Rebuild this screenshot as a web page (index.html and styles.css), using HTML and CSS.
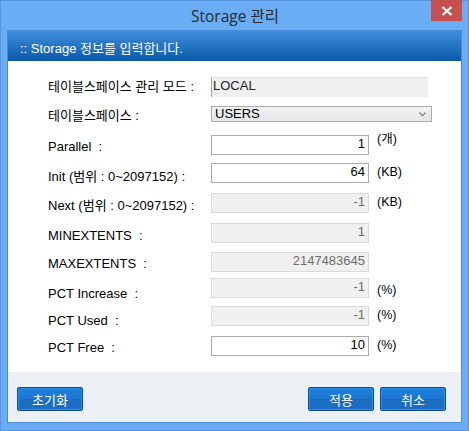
FILE: index.html
```html
<!DOCTYPE html>
<html lang="ko">
<head>
<meta charset="utf-8">
<title>Storage 관리</title>
<link rel="stylesheet" href="styles.css">
</head>
<body>
<div class="window">
  <div class="titlebar">
    <span class="title">Storage 관리</span>
    <button class="close" aria-label="닫기">
      <svg width="12" height="10" viewBox="0 0 12 10"><path d="M1.5 1 L10.5 9 M10.5 1 L1.5 9" stroke="#fff" stroke-width="2.2" fill="none"/></svg>
    </button>
  </div>
  <div class="content">
    <div class="header">:: Storage 정보를 입력합니다.</div>
    <div class="form">
      <div class="label">테이블스페이스 관리 모드 :</div>
      <div class="readonly">LOCAL</div>

      <div class="label">테이블스페이스 :</div>
      <div class="combo"><span>USERS</span>
        <svg class="chev" width="7" height="5" viewBox="0 0 7 5"><path d="M0.5 0.5 L3.5 3.8 L6.5 0.5" stroke="#8a8a8a" stroke-width="1.4" fill="none"/></svg>
      </div>

      <div class="label down-2">Parallel &nbsp;:</div>
      <div class="field">1</div>
      <div class="unit up-5">(개)</div>

      <div class="label down-4">Init (범위 : 0~2097152) :</div>
      <div class="field">64</div>
      <div class="unit">(KB)</div>

      <div class="label down-3">Next (범위 : 0~2097152) :</div>
      <div class="field disabled">-1</div>
      <div class="unit">(KB)</div>

      <div class="label down-3">MINEXTENTS &nbsp;:</div>
      <div class="field disabled">1</div>
      <div class="unit"></div>

      <div class="label down-2">MAXEXTENTS &nbsp;:</div>
      <div class="field disabled">2147483645</div>
      <div class="unit"></div>

      <div class="label down-6">PCT Increase &nbsp;:</div>
      <div class="field disabled">-1</div>
      <div class="unit down-3">(%)</div>

      <div class="label down-5">PCT Used &nbsp;:</div>
      <div class="field disabled">-1</div>
      <div class="unit">(%)</div>

      <div class="label down-2">PCT Free &nbsp;:</div>
      <div class="field">10</div>
      <div class="unit">(%)</div>
    </div>
    <div class="footer">
      <button class="btn">초기화</button>
      <div class="right">
        <button class="btn">적용</button>
        <button class="btn">취소</button>
      </div>
    </div>
  </div>
</div>
</body>
</html>
```
FILE: styles.css
```css
html, body {
  margin: 0;
  padding: 0;
  background: #6badf4;
}
body {
  font-family: "Liberation Sans", "Noto Sans CJK KR", Arial, sans-serif;
  font-size: 12px;
  color: #000;
}
.window {
  position: relative;
  width: 469px;
  height: 431px;
  box-sizing: border-box;
  border: 1px solid #5796dc;
  background: #6badf4;
}
.titlebar {
  height: 29px;
  display: flex;
  align-items: center;
  justify-content: center;
}
.title {
  font-family: "Open Sans", "Noto Sans CJK KR", sans-serif;
  font-size: 15.5px;
  color: #2a2a2a;
  margin-top: -1px;
  margin-left: 1px;
}
.close {
  position: absolute;
  top: -1px;
  right: 6px;
  width: 31px;
  height: 21px;
  border: 0;
  padding: 0;
  background: #c75050;
  display: flex;
  align-items: center;
  justify-content: center;
}
.content {
  margin: 0 6px;
  border: 1px solid #4a8cd8;
  background: #fff;
}
.header {
  height: 30px;
  box-sizing: border-box;
  padding: 7px 0 0 12px;
  color: #fff;
  font-size: 13px;
  background: linear-gradient(#3f8ddb, #0c5bab);
}
.form {
  height: 311px;
  box-sizing: border-box;
  padding: 16px 0 0 40px;
  display: grid;
  grid-template-columns: 163px 158px 8px auto;
  grid-template-rows: 29px 29px 28px 30px 30px 29px 26px 28px 30px 20px;
  align-items: start;
}
.label {
  grid-column: 1;
  height: 20px;
  line-height: 20px;
  font-size: 13px;
  white-space: nowrap;
}
.down-2 { margin-top: 2px; }
.down-3 { margin-top: 3px; }
.down-4 { margin-top: 4px; }
.down-5 { margin-top: 5px; }
.down-6 { margin-top: 6px; }
.up-5 { margin-top: -5px; }
.readonly {
  grid-column: 2 / span 3;
  width: 217px;
  height: 20px;
  box-sizing: border-box;
  background: #f0f0f0;
  border-left: 1px solid #a3a3a3;
  border-top: 1px solid #e3e3e3;
  padding-left: 1px;
  line-height: 15px;
  font-size: 13px;
  color: #222;
}
.combo {
  grid-column: 2 / span 3;
  width: 221px;
  height: 16px;
  box-sizing: border-box;
  border: 1px solid #acacac;
  background: linear-gradient(#f2f2f2, #e5e5e5);
  display: flex;
  align-items: center;
  justify-content: space-between;
  padding: 0 5px 0 3px;
  font-size: 13px;
  color: #000;
}
.combo span { line-height: 14px; }
.field {
  grid-column: 2;
  height: 20px;
  box-sizing: border-box;
  border: 1px solid #ababab;
  background: #fff;
  text-align: right;
  padding-right: 3px;
  line-height: 16px;
  font-size: 13px;
}
.field.disabled {
  border-color: #dadada;
  background: #f0f0f0;
  color: #6d6d6d;
}
.unit {
  grid-column: 4;
  height: 20px;
  line-height: 18px;
  font-size: 12.5px;
}
.footer {
  height: 50px;
  box-sizing: border-box;
  background: #eceff3;
  padding: 15px 15px 0 9px;
  display: flex;
  justify-content: space-between;
  align-items: flex-start;
}
.right {
  display: flex;
  gap: 6px;
}
.btn {
  width: 66px;
  height: 24px;
  box-sizing: border-box;
  border: 1px solid #0d4f98;
  border-radius: 2px;
  background: linear-gradient(#1f80de 0%, #1c76d2 50%, #1a6cc1 51%, #1b6ec4 100%);
  box-shadow: inset 0 0 0 1px #2a8ce6;
  color: #fff;
  font-family: "Liberation Sans", "Noto Sans CJK KR", sans-serif;
  font-size: 13px;
  padding: 0;
  margin: 0;
}
```
